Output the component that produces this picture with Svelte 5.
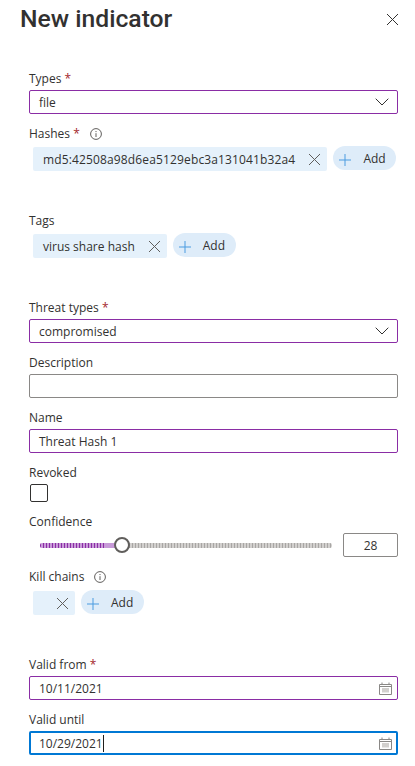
<script>
  const X = "M1 1L12 12M12 1L1 12";
</script>

{#snippet close(cls)}
  <svg class={cls} width="13" height="13" viewBox="0 0 13 13"><path d={X} /></svg>
{/snippet}

{#snippet chevron()}
  <svg class="chev" width="14" height="8" viewBox="0 0 14 8"><path d="M.7.7L7 7l6.3-6.3" /></svg>
{/snippet}

{#snippet info()}
  <svg class="info" width="12" height="12" viewBox="0 0 12 12">
    <circle cx="6" cy="6" r="5.4" />
    <path d="M6 5.2V9M6 3v1.1" />
  </svg>
{/snippet}

{#snippet add()}
  <button class="add">
    <svg width="12" height="12" viewBox="0 0 12 12"><path d="M6 0v12M0 6h12" /></svg>
    <span>Add</span>
  </button>
{/snippet}

{#snippet calendar()}
  <svg class="cal" width="13" height="13" viewBox="0 0 13 13">
    <path class="cal-grid" d="M3 6h7v4.5H3z" />
    <path class="cal-line" d="M.5 2.5h12v10H.5zM.5 4.5h12M3 .5v2M10 .5v2" />
  </svg>
{/snippet}

<main class="panel">
  <header class="head">
    <h1>New indicator</h1>
    {@render close("closer")}
  </header>

  <div class="field">
    <label>Types <b>*</b></label>
    <div class="box purple"><span>file</span>{@render chevron()}</div>
  </div>

  <div class="field spaced">
    <label>Hashes <b>*</b>{@render info()}</label>
    <div class="chips">
      <div class="chip"><span class="hash">md5:42508a98d6ea5129ebc3a131041b32a4</span>{@render close("x")}</div>
      {@render add()}
    </div>
  </div>

  <div class="field spaced">
    <label>Tags</label>
    <div class="chips">
      <div class="chip"><span>virus share hash</span>{@render close("x")}</div>
      {@render add()}
    </div>
  </div>

  <div class="field">
    <label>Threat types <b>*</b></label>
    <div class="box purple"><span>compromised</span>{@render chevron()}</div>
  </div>

  <div class="field">
    <label>Description</label>
    <div class="box"></div>
  </div>

  <div class="field">
    <label>Name</label>
    <div class="box purple"><span>Threat Hash 1</span></div>
  </div>

  <div class="field">
    <label>Revoked</label>
    <div class="check"></div>
  </div>

  <div class="field">
    <label>Confidence</label>
    <div class="slider-row">
      <div class="slider">
        <div class="track filled"></div>
        <div class="thumb"></div>
        <div class="track rest"></div>
      </div>
      <div class="box num">28</div>
    </div>
  </div>

  <div class="field spaced">
    <label>Kill chains{@render info()}</label>
    <div class="chips low">
      <div class="chip empty">{@render close("x")}</div>
      {@render add()}
    </div>
  </div>

  <div class="field">
    <label>Valid from <b>*</b></label>
    <div class="box purple date"><span>10/11/2021</span>{@render calendar()}</div>
  </div>

  <div class="field">
    <label>Valid until</label>
    <div class="box focus date"><span>10/29/2021</span><i class="caret"></i>{@render calendar()}</div>
  </div>
</main>

<style>
  :global(body) {
    margin: 0;
    background: #fff;
  }
  .panel {
    width: 415px;
    height: 766px;
    box-sizing: border-box;
    padding: 0 17px 0 29px;
    font-family: "Open Sans", "Liberation Sans", sans-serif;
    font-size: 12px;
    color: #323130;
    overflow: hidden;
  }
  .head {
    display: flex;
    justify-content: space-between;
    align-items: center;
    height: 38px;
    margin: 0 0 30px -9px;
  }
  h1 {
    margin: 0;
    font-family: Roboto, "Open Sans", sans-serif;
    font-size: 24.7px;
    font-weight: 500;
    line-height: 38px;
  }
  .closer {
    margin-right: -1px;
  }
  svg path, svg circle {
    fill: none;
    stroke-width: 1;
  }
  .closer path { stroke: #323130; }
  .field { margin-bottom: 9px; }
  .spaced { margin-bottom: 39px; }
  label {
    display: flex;
    align-items: center;
    height: 22px;
    padding-bottom: 1px;
    box-sizing: border-box;
    line-height: 20px;
    white-space: pre;
  }
  label b {
    color: #a4262c;
    font-weight: 400;
  }
  .box {
    box-sizing: border-box;
    height: 24px;
    display: flex;
    align-items: center;
    justify-content: space-between;
    padding: 0 8px 0 9px;
    border: 1px solid #8a8886;
    border-radius: 2px;
    background: #fff;
  }
  .purple { border-color: #8a2da5; }
  .date { padding-right: 5px; }
  .focus {
    border: 2px solid #0078d4;
    padding: 0 4px 0 8px;
    justify-content: flex-start;
  }
  .focus .cal { margin-left: auto; }
  .caret {
    width: 1px;
    height: 17px;
    background: #201f1e;
  }
  .chev path { stroke: #323130; }
  .info {
    margin-left: 10px;
  }
  .info circle, .info path { stroke: #605e5c; }
  .chips {
    display: flex;
    align-items: flex-start;
    gap: 6px;
    padding: 1px 0 0 4px;
    height: 25px;
  }
  .chips.low {
    padding-top: 2px;
  }
  .chip {
    display: flex;
    align-items: center;
    gap: 13px;
    height: 24px;
    margin-top: 1px;
    padding: 0 6px 0 10px;
    background: #e5f1fb;
    border-radius: 2px;
    white-space: nowrap;
  }
  .hash { letter-spacing: 0.14px; }
  .chip.empty { padding-left: 23px; }
  .x path { stroke: #605e5c; }
  .add {
    display: flex;
    align-items: center;
    width: 63px;
    height: 24px;
    padding: 0 0 0 6px;
    gap: 12px;
    border: 0;
    border-radius: 12px;
    background: #deecf9;
    font: inherit;
    color: inherit;
  }
  .add svg { margin-top: 4px; }
  .add path { stroke: #4a9be0; }
  .slider-row {
    display: flex;
    align-items: center;
    justify-content: space-between;
  }
  .slider {
    display: flex;
    align-items: center;
    width: 292px;
    margin-left: 11px;
  }
  .track { height: 5px; }
  .filled {
    width: 75px;
    margin-right: -1px;
    border-radius: 2px 0 0 2px;
    background:
      linear-gradient(90deg, transparent 0 66px, #c79ad8 66px),
      repeating-linear-gradient(90deg, #8a2da5 0 1.5px, #c99ad8 1.5px 3px);
  }
  .rest {
    flex: 1;
    margin-left: -1px;
    border-radius: 0 2px 2px 0;
    background: repeating-linear-gradient(90deg, #a8a6a4 0 1.5px, #d2d0ce 1.5px 3px);
  }
  .thumb {
    position: relative;
    z-index: 1;
    box-sizing: border-box;
    width: 16px;
    height: 16px;
    border: 2px solid #605e5c;
    border-radius: 50%;
    background: #fff;
  }
  .num {
    width: 55px;
    justify-content: center;
    padding: 0;
  }
  .check {
    box-sizing: border-box;
    width: 18px;
    height: 18px;
    margin-left: 1px;
    border: 1px solid #323130;
    border-radius: 2px;
  }
  .cal-line { stroke: #8a8886; }
  .cal-grid { fill: #d2d0ce !important; stroke: none !important; }
</style>
